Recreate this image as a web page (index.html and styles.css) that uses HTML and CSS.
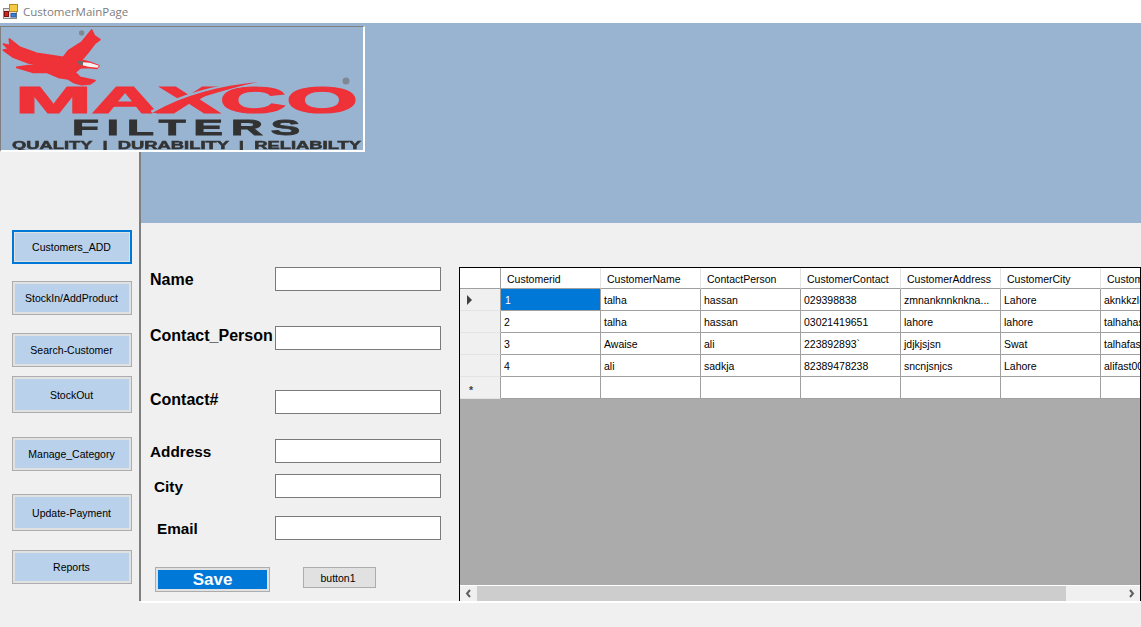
FILE: index.html
```html
<!DOCTYPE html>
<html lang="en">
<head>
<meta charset="utf-8">
<title>CustomerMainPage</title>
<link rel="stylesheet" href="styles.css">
</head>
<body>
<div class="window">
  <header class="titlebar">
    <svg class="app-icon" width="15" height="15" viewBox="0 0 15 15">
      <rect x="0.5" y="4.5" width="13" height="10" fill="#e4e4e4" stroke="#8a8a8a"/>
      <rect x="1.5" y="7.5" width="4" height="5" fill="#d8201c" stroke="#7a1010"/>
      <rect x="6.5" y="0.5" width="8" height="7" fill="#f6c945" stroke="#b58a20"/>
      <rect x="8" y="9.5" width="5" height="3.5" fill="#3b7fd9" stroke="#2a5ca0"/>
    </svg>
    <span class="title-text">CustomerMainPage</span>
  </header>

  <div class="client">
    <div class="banner"></div>
    <div class="logo">
      <svg class="logo-art" width="362" height="123" viewBox="1 27 362 123">
        <defs><filter id="soft" x="-5%" y="-5%" width="110%" height="110%"><feGaussianBlur stdDeviation="0.65"/></filter></defs>
        <g filter="url(#soft)">
          <g transform="translate(0 24) scale(.3333)">
            <path fill="#ee3038" stroke="#ee3038" stroke-width="5" stroke-linejoin="round" d="M275 18 283 35 300 47 285 58 268 80 245 108 270 115 297 125 290 133 265 130 240 132 225 145 240 160 285 170 270 180 245 182 220 175 205 165 175 160 140 145 100 145 50 130 85 125 130 127 80 115 40 100 10 78 25 75 10 60 30 65 28 45 60 70 110 88 190 100 205 80 245 55Z"/>
            <path fill="#f2f2f2" d="M248 115 270 116 297 125 292 131 265 128 248 124Z"/>
            <path fill="#6b6b6b" d="M232 110 250 112 248 124 238 124Z"/>
            <circle cx="245" cy="27" r="8" fill="#7f8794"/>
          </g>
          <text class="logo-maxco" x="15" y="113" textLength="343" lengthAdjust="spacingAndGlyphs">MAXCO</text>
          <path d="M152 113C180 96 215 88 258 82" fill="none" stroke="#99b4d1" stroke-width="5"/>
          <path d="M152 113C185 94 220 86 258 82C222 90 190 100 160 113Z" fill="#ee3038"/>
          <circle cx="346" cy="81" r="3.5" fill="#7f8794"/>
          <text class="logo-filters" x="72" y="135" textLength="236" lengthAdjust="spacingAndGlyphs">FILTERS</text>
          <text class="logo-tag" x="12" y="149" textLength="349" lengthAdjust="spacingAndGlyphs">QUALITY  |  DURABILITY  |  RELIABILTY</text>
        </g>
      </svg>
    </div>

    <nav class="sidebar">
      <button class="nav-btn focused">Customers_ADD</button>
      <button class="nav-btn gap-17">StockIn/AddProduct</button>
      <button class="nav-btn gap-18">Search-Customer</button>
      <button class="nav-btn tall gap-9">StockOut</button>
      <button class="nav-btn gap-24">Manage_Category</button>
      <button class="nav-btn tall gap-23">Update-Payment</button>
      <button class="nav-btn gap-19">Reports</button>
    </nav>

    <main class="content">
      <form class="form">
        <div class="row"><label class="field-label large">Name</label><input class="field" type="text"></div>
        <div class="row gap-35"><label class="field-label large raise">Contact_Person</label><input class="field" type="text"></div>
        <div class="row gap-40"><label class="field-label large raise">Contact#</label><input class="field" type="text"></div>
        <div class="row gap-25"><label class="field-label">Address</label><input class="field" type="text"></div>
        <div class="row gap-11"><label class="field-label indent-4">City</label><input class="field" type="text"></div>
        <div class="row gap-18"><label class="field-label indent-7">Email</label><input class="field" type="text"></div>
        <div class="actions">
          <button class="save-btn" type="button">Save</button>
          <button class="plain-btn" type="button">button1</button>
        </div>
      </form>

      <section class="grid-frame">
        <div class="grid-body">
          <table class="grid">
            <colgroup>
              <col class="col-head"><col class="col-data"><col class="col-data"><col class="col-data"><col class="col-data"><col class="col-data"><col class="col-data"><col class="col-data">
            </colgroup>
            <thead>
              <tr><th class="corner"></th><th>Customerid</th><th>CustomerName</th><th>ContactPerson</th><th>CustomerContact</th><th>CustomerAddress</th><th>CustomerCity</th><th>CustomerEmail</th></tr>
            </thead>
            <tbody>
              <tr><th class="row-head"><span class="row-arrow"></span></th><td class="selected">1</td><td>talha</td><td>hassan</td><td>029398838</td><td>zmnanknnknkna...</td><td>Lahore</td><td>aknkkzl@gmail.com</td></tr>
              <tr><th class="row-head"></th><td>2</td><td>talha</td><td>hassan</td><td>03021419651</td><td>lahore</td><td>lahore</td><td>talhahassan@gmail</td></tr>
              <tr><th class="row-head"></th><td>3</td><td>Awaise</td><td>ali</td><td>223892893`</td><td>jdjkjsjsn</td><td>Swat</td><td>talhafast@gmail</td></tr>
              <tr><th class="row-head"></th><td>4</td><td>ali</td><td>sadkja</td><td>82389478238</td><td>sncnjsnjcs</td><td>Lahore</td><td>alifast00@gmail</td></tr>
              <tr><th class="row-head new-row">*</th><td></td><td></td><td></td><td></td><td></td><td></td><td></td></tr>
            </tbody>
          </table>
        </div>
        <div class="scrollbar">
          <span class="scroll-btn">
            <svg width="7" height="9" viewBox="0 0 7 9"><path d="M5 1 2 4.5 5 8" fill="none" stroke="#606060" stroke-width="2"/></svg>
          </span>
          <span class="scroll-thumb"></span>
          <span class="scroll-track"></span>
          <span class="scroll-btn">
            <svg width="7" height="9" viewBox="0 0 7 9"><path d="M2 1 5 4.5 2 8" fill="none" stroke="#606060" stroke-width="2"/></svg>
          </span>
        </div>
      </section>
    </main>
  </div>
</div>
</body>
</html>
```

FILE: styles.css
```css
* { box-sizing: border-box; }
html, body { margin: 0; padding: 0; }
body { background: #f0f0f0; font-family: "Liberation Sans", Arial, sans-serif; font-size: 10.5px; color: #000; overflow: hidden; }
.window { width: 1141px; height: 627px; display: flex; flex-direction: column; }

.titlebar { height: 23px; background: #fff; display: flex; align-items: center; padding-left: 3px; flex: none; }
.app-icon { flex: none; }
.title-text { margin-left: 5px; font-family: "Open Sans", sans-serif; font-size: 11.5px; color: #7d7d7d; }

.client { flex: 1; display: grid; grid-template-columns: 141px 1000px; grid-template-rows: 129px 71px 380px 1fr; }
.banner { grid-column: 1 / 3; grid-row: 1 / 3; background: #99b4d1; }
.logo { grid-column: 1 / 3; grid-row: 1; width: 365px; height: 126px; margin-top: 3px; z-index: 2; border-style: solid; border-width: 1px 2px 2px 1px; border-color: #808080 #fff #fff #808080; background: #99b4d1; }
.logo-art { display: block; }
.logo-maxco { font: 700 36px "Liberation Sans", sans-serif; fill: #ee3038; stroke: #ee3038; stroke-width: 1.2px; }
.logo-filters { font: 700 22px "Liberation Sans", sans-serif; fill: #333; stroke: #333; stroke-width: .8px; letter-spacing: 4px; }
.logo-tag { font: 700 11px "Liberation Sans", sans-serif; fill: #333; stroke: #333; stroke-width: .5px; white-space: pre; }

.sidebar { grid-column: 1; grid-row: 2 / 4; height: 449px; background: #f0f0f0; border-right: 2px solid #808080; padding: 78px 0 0 12px; display: flex; flex-direction: column; align-items: flex-start; }
.nav-btn { width: 120px; height: 34px; flex: none; padding: 0 1px 0 0; border: 1px solid #adadad; box-shadow: inset 0 0 0 2px #e1e1e1; background: #b9d1ea; font: 10.5px "Liberation Sans", sans-serif; color: #000; }
.nav-btn.tall { height: 37px; }
.nav-btn.focused { border: 2px solid #0078d7; box-shadow: inset 0 0 0 1px #e1e1e1; }
.gap-9 { margin-top: 9px; }
.gap-11 { margin-top: 11px; }
.gap-17 { margin-top: 17px; }
.gap-18 { margin-top: 18px; }
.gap-19 { margin-top: 19px; }
.gap-23 { margin-top: 23px; }
.gap-24 { margin-top: 24px; }
.gap-25 { margin-top: 25px; }
.gap-35 { margin-top: 35px; }
.gap-40 { margin-top: 40px; }

.content { grid-column: 2; grid-row: 3; display: flex; padding-top: 44px; width: 1000px; height: 380px; border-bottom: 2px solid; border-image: linear-gradient(#e3e3e3 50%, #fff 50%) 2; z-index: 1; }
.form { width: 318px; flex: none; padding-left: 9px; }
.row { display: flex; align-items: center; height: 24px; }
.field-label { width: 125px; flex: none; padding-top: 2px; font-weight: 700; font-size: 15.3px; white-space: nowrap; }
.field-label.large { font-size: 16px; }
.field-label.raise { padding-top: 0; padding-bottom: 4px; }
.indent-4 { padding-left: 4px; }
.indent-7 { padding-left: 7px; }
.field { width: 166px; height: 24px; border: 1px solid #7a7a7a; background: #fff; padding: 0 2px; margin: 0; border-radius: 0; outline: none; }

.actions { display: flex; align-items: flex-start; margin-top: 27px; padding-left: 5px; }
.save-btn { width: 115px; height: 25px; padding: 0; border: 1px solid #adadad; box-shadow: inset 0 0 0 2px #e1e1e1; background: #0078d7; color: #fff; font: 700 17px "Liberation Sans", sans-serif; }
.plain-btn { width: 73px; height: 21px; margin-left: 33px; padding: 0 3px 0 0; border: 1px solid #adadad; background: #e1e1e1; font: 10.5px "Liberation Sans", sans-serif; color: #000; }

.grid-frame { width: 682px; height: 334px; flex: none; display: flex; flex-direction: column; border-style: solid; border-color: #000; border-width: 1px 1px 0 1px; }
.grid-body { flex: 1; background: #ababab; overflow: hidden; min-height: 0; }
.grid { border-collapse: separate; border-spacing: 0; table-layout: fixed; width: 741px; font-size: 10.5px; }
.col-head { width: 41px; }
.col-data { width: 100px; }
.grid th, .grid td { padding: 0; overflow: hidden; white-space: nowrap; text-align: left; font-weight: 400; }
.grid thead th { height: 21px; background: #fff; padding: 2px 0 0 6px; border-right: 1px solid #e3e3e3; border-bottom: 1px solid #a0a0a0; }
.grid thead th.corner { border-right-color: #a0a0a0; }
.grid td { height: 22px; background: #fff; padding-left: 3px; border-right: 1px solid #a0a0a0; border-bottom: 1px solid #a0a0a0; }
.grid td.selected { background: #0078d7; color: #fff; padding-left: 4px; }
.grid th.row-head { height: 22px; background: #f0f0f0; border-right: 1px solid #a0a0a0; border-bottom: 1px solid #e3e3e3; padding-left: 7px; }
.grid th.new-row { padding: 4px 0 0 9px; font-weight: 700; color: #404040; }
.row-arrow { display: block; width: 0; height: 0; border-style: solid; border-width: 5px 0 5px 5px; border-color: transparent transparent transparent #404040; }

.scrollbar { height: 16px; flex: none; display: flex; background: #f0f0f0; border-top: 1px solid #fff; }
.scroll-btn { width: 17px; flex: none; display: flex; align-items: center; justify-content: center; }
.scroll-thumb { width: 589px; flex: none; background: #cdcdcd; }
.scroll-track { flex: 1; }
```
